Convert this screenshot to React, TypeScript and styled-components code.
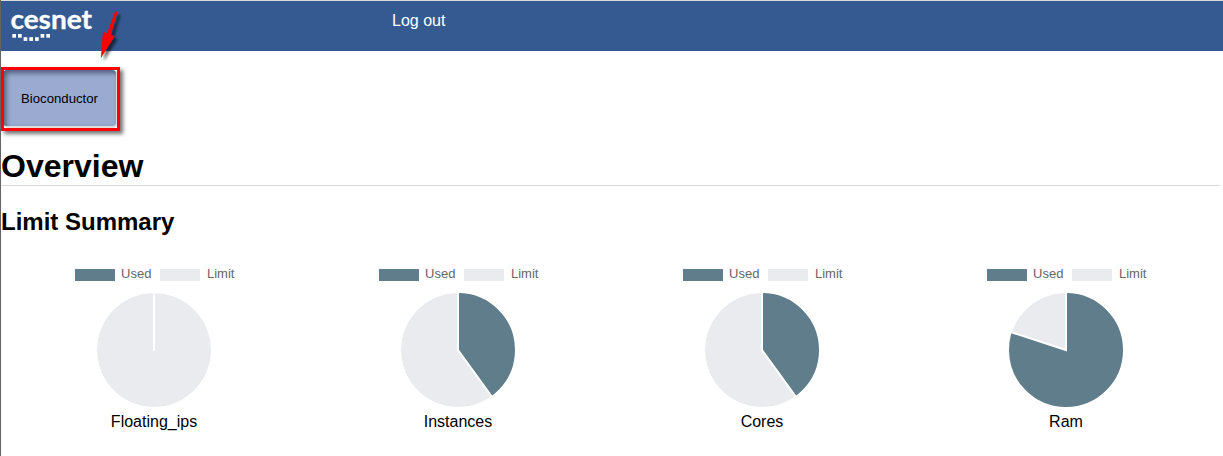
import React from "react";
import styled, { createGlobalStyle } from "styled-components";

const GlobalStyle = createGlobalStyle`
  *, *::before, *::after { box-sizing: border-box; }
  body {
    margin: 0;
    background: #fff;
    color: #000;
    font-family: "Liberation Sans", Arial, sans-serif;
    font-size: 16px;
    overflow: hidden;
  }
`;

const Page = styled.div`
  height: 456px;
  border-left: 1px solid #646464;
  overflow: hidden;
`;

const Header = styled.header`
  display: flex;
  align-items: flex-start;
  height: 51px;
  border-top: 1px solid #dcdcdc;
  background: #355a91;
`;

const Brand = styled.div`
  width: 391px;
  height: 50px;
`;

const LogoutLink = styled.a`
  margin-top: 11px;
  line-height: 18px;
  color: #fff;
`;

const ProjectBar = styled.nav`
  position: relative;
  padding: 19px 0 0 2px;
  height: 79px;
`;

const ProjectTab = styled.button`
  display: block;
  width: 113px;
  height: 56px;
  padding: 0;
  border: 0;
  border-radius: 4px;
  background: #9aaad0;
  box-shadow: inset 3px 3px 5px rgba(30, 40, 70, 0.6), 1px 1px 1px 1px #dcdcdc;
  color: #000;
  font: 13.2px "Liberation Sans", Arial, sans-serif;
`;

const Highlight = styled.div`
  position: absolute;
  left: 0;
  top: 16px;
  width: 119px;
  height: 64px;
  border: 3px solid #fe0000;
  box-shadow: 3px 3px 4px rgba(0, 0, 0, 0.55);
`;

const Arrow = styled.svg`
  position: absolute;
  left: 89px;
  top: -51px;
  overflow: visible;
`;

const Title = styled.h1`
  margin: 16px 3px 0 0;
  padding-top: 1px;
  height: 40px;
  border-bottom: 1px solid #d9d9d9;
  font-size: 32px;
  line-height: 39px;
`;

const Subtitle = styled.h2`
  margin: 22px 0 0;
  font-size: 24px;
  line-height: 28px;
`;

const Charts = styled.section`
  display: grid;
  grid-template-columns: repeat(4, 304px);
  margin: 32px 0 0 1px;
`;

const Chart = styled.figure`
  display: flex;
  flex-direction: column;
  align-items: center;
  margin: 0;
`;

const Legend = styled.div`
  display: flex;
  align-items: flex-start;
  height: 14px;
  padding-left: 1px;
`;

const LegendItem = styled.span`
  display: flex;
  align-items: flex-start;
  color: #666;
  font-size: 13px;
  line-height: 11px;
  & + & { margin-left: 9px; }
`;

const Swatch = styled.i<{ $color: string }>`
  width: 40px;
  height: 12px;
  margin: 1px 6.5px 0 0;
  background: ${(p) => p.$color};
`;

const Pie = styled.svg`
  display: block;
  margin-top: 10px;
`;

const Caption = styled.figcaption`
  margin-top: 5px;
  line-height: 18px;
`;

const USED = "#607d8b";
const LIMIT = "#eaebef";

const quotas = [
  { name: "Floating_ips", used: 0 },
  { name: "Instances", used: 0.4 },
  { name: "Cores", used: 0.4 },
  { name: "Ram", used: 0.8 },
];

function PieChart({ used }: { used: number }) {
  const r = 58;
  const angle = used * 2 * Math.PI;
  const x = r + r * Math.sin(angle);
  const y = r - r * Math.cos(angle);
  return (
    <Pie width="116" height="116" viewBox="0 0 116 116">
      <circle cx={r} cy={r} r={57} fill={LIMIT} />
      {used > 0 && (
        <path
          d={`M58 58V0A58 58 0 ${used > 0.5 ? 1 : 0} 1 ${x} ${y}Z`}
          fill={USED}
        />
      )}
      <path d={`M58 0V58${used > 0 ? `L${x} ${y}` : ""}`} fill="none" stroke="#fff" strokeWidth="2" strokeLinecap="square" />
      <circle cx={r} cy={r} r={58} fill="none" stroke="#fff" strokeWidth="2" />
    </Pie>
  );
}

function Logo() {
  const dots = [
    [11.3, 33], [17, 33], [22.6, 36.2], [28.3, 36.2], [34, 36.2], [39.6, 33], [45.3, 33],
  ];
  return (
    <svg width="100" height="50" fill="#fff">
      <text
        x="9.4"
        y="27.6"
        fontFamily="Lato, sans-serif"
        fontWeight="700"
        fontSize="27"
        textLength="81.6"
        lengthAdjust="spacingAndGlyphs"
        stroke="#fff"
        strokeWidth="0.3"
      >
        cesnet
      </text>
      {dots.map(([x, y]) => (
        <rect key={x} x={x} y={y} width="3.7" height="3.7" />
      ))}
    </svg>
  );
}

export default function App() {
  return (
    <>
      <GlobalStyle />
      <Page>
        <Header>
          <Brand><Logo /></Brand>
          <LogoutLink>Log out</LogoutLink>
        </Header>
        <ProjectBar>
          <ProjectTab>Bioconductor</ProjectTab>
          <Highlight />
          <Arrow width="40" height="64">
            <defs>
              <filter id="arrowShadow" x="-50%" y="-50%" width="220%" height="220%">
                <feDropShadow dx="3" dy="3" stdDeviation="1.7" floodColor="#000" floodOpacity="0.6" />
              </filter>
            </defs>
            <path
              d="M25.3 11L27.5 12L20.8 34.8L24.6 36.3L10.9 58L13 31.8L17 33.3Z"
              fill="#fe0000"
              filter="url(#arrowShadow)"
            />
          </Arrow>
        </ProjectBar>
        <Title>Overview</Title>
        <Subtitle>Limit Summary</Subtitle>
        <Charts>
          {quotas.map((q) => (
            <Chart key={q.name}>
              <Legend>
                <LegendItem><Swatch $color={USED} />Used</LegendItem>
                <LegendItem><Swatch $color={LIMIT} />Limit</LegendItem>
              </Legend>
              <PieChart used={q.used} />
              <Caption>{q.name}</Caption>
            </Chart>
          ))}
        </Charts>
      </Page>
    </>
  );
}
